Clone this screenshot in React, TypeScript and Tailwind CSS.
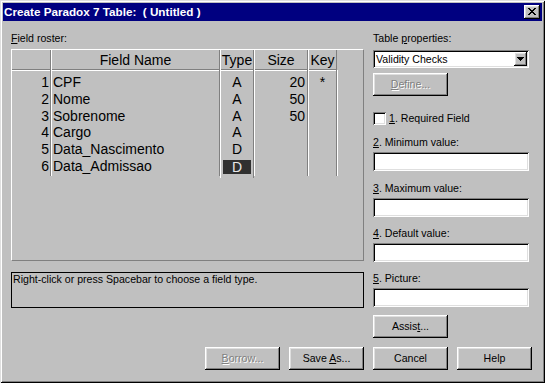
import React from "react";

const raised =
  "shadow-[inset_-1px_-1px_#000,inset_1px_1px_#fff,inset_-2px_-2px_#808080,inset_2px_2px_#dfdfdf]";
const sunken =
  "shadow-[inset_1px_1px_#808080,inset_-1px_-1px_#fff,inset_2px_2px_#000,inset_-2px_-2px_#dfdfdf]";

function Btn({
  children,
  disabled,
  className = "",
}: {
  children: React.ReactNode;
  disabled?: boolean;
  className?: string;
}) {
  return (
    <div
      className={`h-[23px] w-[75px] flex items-center justify-center bg-[#c0c0c0] text-[10.6px] leading-[13px] ${raised} ${
        disabled ? "text-[#808080] [text-shadow:1px_1px_0_#fff]" : "text-black"
      } ${className}`}
    >
      <span className="whitespace-pre">{children}</span>
    </div>
  );
}

function U({ children }: { children: React.ReactNode }) {
  return <span className="underline underline-offset-[1px]">{children}</span>;
}

const rows = [
  ["1", "CPF", "A", "20", "*"],
  ["2", "Nome", "A", "50", ""],
  ["3", "Sobrenome", "A", "50", ""],
  ["4", "Cargo", "A", "", ""],
  ["5", "Data_Nascimento", "D", "", ""],
  ["6", "Data_Admissao", "D", "", ""],
];

function Col({
  title,
  width,
  idx,
  first,
  align,
}: {
  title: string;
  width: string;
  idx: number;
  first?: boolean;
  align: string;
}) {
  return (
    <div
      className={`flex flex-col ${width} border-r border-r-[#808080] ${
        first ? "" : "border-l border-l-white"
      }`}
    >
      <div className="h-[20px] pt-[2px] leading-[17px] text-center border-b border-b-[#808080] whitespace-nowrap">
        {title}
      </div>
      <div className="pt-[3px] pb-[1px] border-t border-t-white">
        {rows.map((r, i) => {
          const sel = idx === 2 && i === 5;
          return (
            <div
              key={i}
              className={`h-[16.8px] leading-[16.8px] whitespace-nowrap ${align}`}
            >
              {sel ? (
                <div className="mx-[2px] mt-[2.5px] h-[14px] leading-[14px] bg-[#303030] text-[#e8e8e8] text-center">
                  {r[idx]}
                </div>
              ) : (
                r[idx]
              )}
            </div>
          );
        })}
      </div>
    </div>
  );
}

function Field({ label, num }: { label: string; num: string }) {
  return (
    <>
      <div className="h-[13px] leading-[13px] text-[10.6px] whitespace-nowrap">
        <U>{num}</U>. {label}
      </div>
      <div className={`mt-[3px] h-[19px] w-[156px] bg-white ${sunken}`} />
    </>
  );
}

export default function App() {
  return (
    <div className="w-[545px] h-[383px] bg-[#c0c0c0] p-[3px] shadow-[inset_1px_1px_#dfdfdf,inset_-1px_-1px_#000,inset_2px_2px_#fff,inset_-2px_-2px_#808080] [font-family:'Liberation_Sans',Arial,sans-serif] text-black overflow-hidden">
      {/* Title bar */}
      <div className="h-[18px] bg-[#000080] flex items-center justify-between pl-[1px] pr-[2px]">
        <span className="text-white font-bold text-[11.7px] leading-[14px] whitespace-pre">
          {"Create Paradox 7 Table:  ( Untitled )"}
        </span>
        <div className={`w-[16px] h-[14px] bg-[#c0c0c0] flex items-center justify-center ${raised}`}>
          <svg width="8" height="7" viewBox="0 0 8 7" shapeRendering="crispEdges" className="ml-[-1px] mt-[-1px]">
            <rect x="0" y="0" width="2" height="1" fill="#000" />
            <rect x="6" y="0" width="2" height="1" fill="#000" />
            <rect x="1" y="1" width="2" height="1" fill="#000" />
            <rect x="5" y="1" width="2" height="1" fill="#000" />
            <rect x="2" y="2" width="4" height="1" fill="#000" />
            <rect x="3" y="3" width="2" height="1" fill="#000" />
            <rect x="2" y="4" width="4" height="1" fill="#000" />
            <rect x="1" y="5" width="2" height="1" fill="#000" />
            <rect x="5" y="5" width="2" height="1" fill="#000" />
            <rect x="0" y="6" width="2" height="1" fill="#000" />
            <rect x="6" y="6" width="2" height="1" fill="#000" />
          </svg>
        </div>
      </div>

      <div className="flex pl-[8px] pt-[11px]">
        {/* Left column */}
        <div className="w-[353px] flex flex-col">
          <div className="h-[13px] leading-[13px] text-[10.6px]">
            <U>F</U>ield roster:
          </div>
          <div className="mt-[4px] w-[353px] h-[212px] border border-t-white border-l-white border-r-[#808080] border-b-[#808080] flex items-start text-[14px]">
            <Col title="" width="w-[39px]" idx={0} first align="text-right pr-[1px]" />
            <Col title="Field Name" width="w-[169px]" idx={1} align="text-left pl-[1px]" />
            <Col title="Type" width="w-[34px]" idx={2} align="text-center" />
            <Col title="Size" width="w-[54px]" idx={3} align="text-right pr-[2px]" />
            <Col title="Key" width="w-[29px]" idx={4} align="text-center" />
            <div className="flex flex-col">
              <div className="h-[20px]" />
              <div className="w-[1px] h-[106px] bg-white" />
            </div>
          </div>
          <div className="mt-[11px] h-[36px] border border-black px-[1px] text-[10.6px] leading-[13px]">
            Right-click or press Spacebar to choose a field type.
          </div>
          <div className="mt-[39px] flex justify-end gap-[9px]">
            <Btn disabled>
              <U>B</U>orrow...
            </Btn>
            <Btn>
              {"Save "}
              <U>A</U>s...
            </Btn>
          </div>
        </div>

        {/* Right column */}
        <div className="ml-[9px] w-[159px] flex flex-col">
          <div className="h-[13px] leading-[13px] text-[10.6px]">
            Table <U>p</U>roperties:
          </div>
          <div className={`mt-[5px] h-[18px] w-[156px] bg-white flex items-center justify-between pl-[3px] pr-[2px] ${sunken}`}>
            <span className="text-[10.6px] leading-[13px]">Validity Checks</span>
            <div className={`w-[13px] h-[14px] bg-[#c0c0c0] flex items-center justify-center ${raised}`}>
              <svg width="7" height="4" viewBox="0 0 7 4" shapeRendering="crispEdges">
                <path d="M0 0H7L3.5 4Z" fill="#000" />
              </svg>
            </div>
          </div>
          <Btn disabled className="mt-[5px]">
            <U>D</U>efine...
          </Btn>
          <div className="mt-[16px] h-[13px] flex items-center gap-[3px]">
            <div className={`w-[13px] h-[13px] bg-white ${sunken}`} />
            <span className="text-[10.6px] leading-[13px]">
              <U>1</U>. Required Field
            </span>
          </div>
          <div className="mt-[11px]" />
          <Field num="2" label="Minimum value:" />
          <div className="mt-[11px]" />
          <Field num="3" label="Maximum value:" />
          <div className="mt-[10px]" />
          <Field num="4" label="Default value:" />
          <div className="mt-[10px]" />
          <Field num="5" label="Picture:" />
          <Btn className="mt-[8px]">
            Assis<U>t</U>...
          </Btn>
          <div className="mt-[9px] flex gap-[9px]">
            <Btn>Cancel</Btn>
            <Btn>Help</Btn>
          </div>
        </div>
      </div>
    </div>
  );
}
